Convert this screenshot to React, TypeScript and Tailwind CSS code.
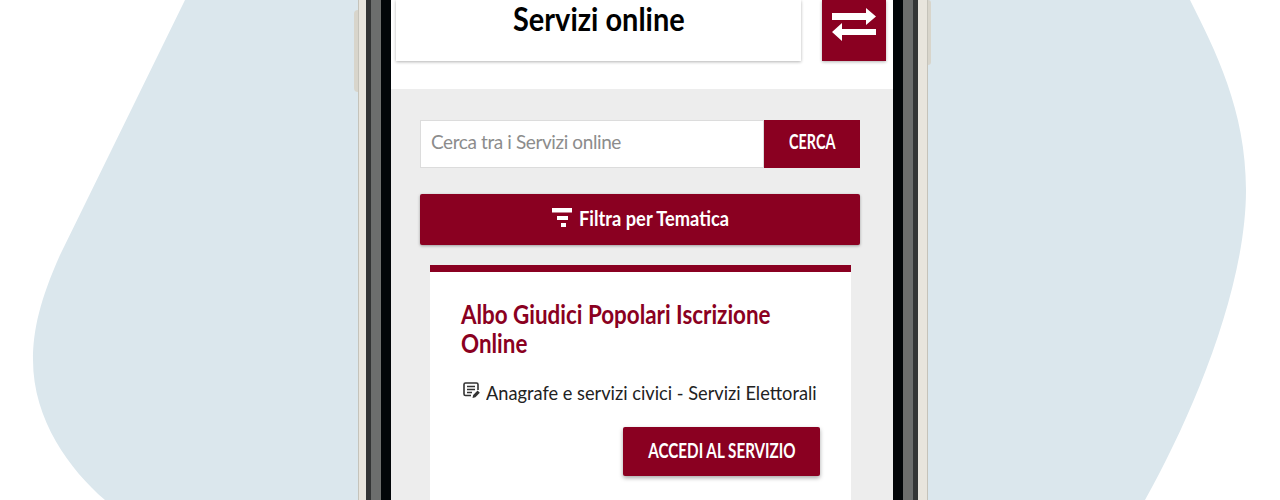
const font = "font-['Lato','Liberation_Sans',sans-serif]"

function SwapIcon() {
  return (
    <svg viewBox="0 0 44 33" className="w-[44px] h-[33px]" fill="#fff">
      <path d="M0 5h34V0l10 8.5L34 17v-5H0z"/>
      <path d="M44 21H10v-6L0 24l10 9v-6h34z"/>
    </svg>
  )
}

function FilterIcon() {
  return (
    <svg viewBox="0 0 20 19" className="w-[20px] h-[19px] shrink-0" fill="#fff">
      <rect x="0" y="0" width="20" height="4.5"/>
      <rect x="5" y="8" width="11" height="4"/>
      <rect x="9" y="15" width="5" height="4"/>
    </svg>
  )
}

function DocIcon() {
  return (
    <svg viewBox="0 0 17 17" className="w-[17px] h-[17px] shrink-0 ml-[2px] mb-[4px]" fill="none" stroke="#333" strokeWidth="1.6">
      <path d="M8 13.5H2.5a1.5 1.5 0 0 1-1.5-1.5V2.5A1.5 1.5 0 0 1 2.5 1h11A1.5 1.5 0 0 1 15 2.5V8"/>
      <path d="M4 4.5h8M4 7.5h8M4 10.5h5"/>
      <path d="M9.5 16l.7-3 4.4-4.4 2.2 2.2-4.4 4.4z" fill="#333" stroke="none"/>
    </svg>
  )
}

export default function App() {
  return (
    <div className={`relative w-[1280px] h-[500px] overflow-hidden bg-white ${font}`}>
      <svg viewBox="0 0 1280 500" className="absolute inset-0 w-[1280px] h-[500px]">
        <path fill="#dbe7ed" d="M185 0 L60 255 C40 300 33 330 33 360 C33 420 70 470 105 500 L1145 500 C1190 420 1246 290 1246 190 C1246 110 1215 50 1190 0 Z"/>
      </svg>

      <div className="relative ml-[358px] w-[570px] h-[500px] flex">
        <div className="absolute left-[-4px] top-[10px] w-[4px] h-[82px] bg-[#d8d5cb] rounded-l-sm"/>
        <div className="absolute right-[-3px] top-0 w-[3px] h-[65px] bg-[#d8d5cb] rounded-r-sm"/>

        <div className="w-[8px] bg-[#e8e5dd] border-l border-[#c5c3ba]"/>
        <div className="w-[5px] bg-[#333535]"/>
        <div className="w-[10px] bg-[#6c6e6d]"/>
        <div className="w-[10px] bg-[#020609]"/>

        <main className="w-[502px] flex flex-col bg-white">
          <header className="h-[89px] flex items-start pl-[5px] pr-[7px] justify-between shrink-0">
            <div className="w-[405px] h-[61px] bg-white shadow-[0_1px_3px_rgba(0,0,0,0.3)] flex items-center justify-center pb-[25px]">
              <h1 className="text-[33px] font-bold text-black leading-none scale-x-[.877] whitespace-nowrap">Servizi online</h1>
            </div>
            <button type="button" className="w-[64px] h-[61px] bg-[#8a0021] shadow-[0_1px_3px_rgba(0,0,0,0.3)] flex items-center justify-center pb-[12px]">
              <SwapIcon/>
            </button>
          </header>

          <section className="flex-1 bg-[#ededed] pt-[31px] px-[29px]">
            <div className="flex h-[48px] w-[440px]">
              <input readOnly placeholder="Cerca tra i Servizi online" className="flex-1 min-w-0 bg-white border border-[#dcdcdc] px-[10px] pb-[3px] text-[19px] tracking-[-0.4px] text-[#333] placeholder:text-[#8c8c8c] outline-none"/>
              <button type="button" className="w-[96px] bg-[#8a0021] text-white font-bold text-[20px] pb-[6px]">
                <span className="inline-block scale-x-[.72]">CERCA</span>
              </button>
            </div>

            <button type="button" className="mt-[26px] w-[440px] h-[51px] bg-[#8a0021] text-white font-bold text-[20px] rounded-[2px] pb-[4px] shadow-[0_1px_3px_rgba(0,0,0,0.35)] flex items-center justify-center gap-[7px]">
              <FilterIcon/>
              <span className="inline-block w-[149px] text-left origin-left scale-x-[.914] whitespace-nowrap">Filtra per Tematica</span>
            </button>

            <article className="mt-[20px] ml-[10px] w-[421px] h-[300px] bg-white border-t-[7px] border-[#8a0021] pt-[28px] px-[31px]">
              <h2 className="w-[400px] origin-left scale-x-[.861] text-[26px] font-bold text-[#8a0021] leading-[29px]">Albo Giudici Popolari Iscrizione Online</h2>
              <p className="mt-[20px] flex items-center gap-[6px] text-[20px] text-[#222] leading-[28px]">
                <DocIcon/>
                <span className="inline-block origin-left scale-x-[.911] whitespace-nowrap">Anagrafe e servizi civici - Servizi Elettorali</span>
              </p>
              <div className="mt-[21px] flex justify-end">
                <button type="button" className="w-[197px] h-[49px] bg-[#8a0021] text-white font-bold text-[20px] rounded-[2px] pb-[3px] shadow-[0_2px_4px_rgba(0,0,0,0.35)]">
                  <span className="inline-block scale-x-[.76] whitespace-nowrap">ACCEDI AL SERVIZIO</span>
                </button>
              </div>
            </article>
          </section>
        </main>

        <div className="w-[10px] bg-[#020609]"/>
        <div className="w-[10px] bg-[#6c6e6d]"/>
        <div className="w-[5px] bg-[#333535]"/>
        <div className="w-[10px] bg-[#e8e5dd] border-r border-[#c5c3ba]"/>
      </div>
    </div>
  )
}
